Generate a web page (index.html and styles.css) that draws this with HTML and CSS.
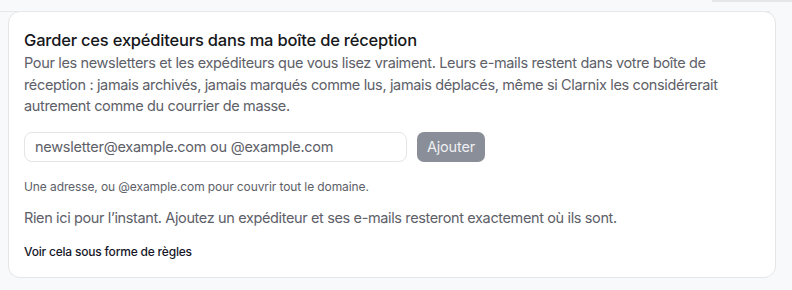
FILE: index.html
```html
<!DOCTYPE html>
<html lang="fr">
<head>
  <meta charset="UTF-8">
  <meta name="viewport" content="width=device-width, initial-scale=1.0">
  <title>Expéditeurs conservés</title>
  <link rel="stylesheet" href="styles.css">
</head>
<body>
  <div class="top-strip">
    <div class="top-tab"></div>
  </div>
  <div class="card">
    <h2>Garder ces expéditeurs dans ma boîte de réception</h2>
    <p class="desc">Pour les newsletters et les expéditeurs que vous lisez vraiment. Leurs e-mails restent dans votre boîte de réception : jamais archivés, jamais marqués comme lus, jamais déplacés, même si Clarnix les considérerait autrement comme du courrier de masse.</p>
    <div class="add-row">
      <input type="text" class="sender-input" placeholder="newsletter@example.com ou @example.com">
      <button class="add-btn" disabled>Ajouter</button>
    </div>
    <p class="hint">Une adresse, ou @example.com pour couvrir tout le domaine.</p>
    <p class="empty">Rien ici pour l’instant. Ajoutez un expéditeur et ses e-mails resteront exactement où ils sont.</p>
    <a class="rules-link" href="#">Voir cela sous forme de règles</a>
  </div>
</body>
</html>
```

FILE: styles.css
```css
body {
  font-family: Inter, "Noto Sans", sans-serif;
  background-color: #f7f9fa;
  color: #111;
  margin: 0;
  padding: 0 16px 0 8px;
}
.top-strip {
  height: 11px;
  margin-left: -8px;
  margin-right: 6px;
  border-bottom: 1px solid #e6e8eb;
  position: relative;
}
.top-tab {
  position: absolute;
  right: -22px;
  top: 0;
  width: 80px;
  height: 2px;
  background: #e4e6ea;
}
.card {
  background: #fff;
  border: 1px solid #e3e5e8;
  border-radius: 12px;
  margin-top: -1px;
  padding: 16px 15px 17px 15px;
}
.card h2 {
  font-size: 16.5px;
  font-weight: 500;
  letter-spacing: -0.2px;
  margin: 0;
  line-height: 24px;
  color: #16171a;
}
.desc {
  font-size: 14.5px;
  line-height: 21.5px;
  color: #5d6068;
  letter-spacing: -0.35px;
  margin: 0 0 15px;
}
.add-row {
  display: flex;
  gap: 10px;
  align-items: center;
}
.sender-input {
  width: 383px;
  height: 30px;
  box-sizing: border-box;
  border: 1px solid #e3e5e8;
  border-radius: 8px;
  padding: 0 10px;
  font-family: inherit;
  font-size: 14.5px;
  letter-spacing: -0.25px;
  color: #333;
  background: #fff;
}
.sender-input::placeholder {
  color: #5d6068;
}
.add-btn {
  height: 30px;
  padding: 0 10px;
  background-color: #8a8e98;
  color: #eef0f3;
  border: none;
  border-radius: 7px;
  font-family: inherit;
  font-size: 14.5px;
  letter-spacing: -0.2px;
}
.hint {
  font-size: 12px;
  color: #5d6068;
  letter-spacing: -0.1px;
  margin: 17px 0 0;
  line-height: 16px;
}
.empty {
  font-size: 14.5px;
  color: #5d6068;
  letter-spacing: -0.37px;
  margin: 13px 0 0;
  line-height: 20px;
}
.rules-link {
  display: block;
  font-size: 12px;
  font-weight: 500;
  color: #16172a;
  text-decoration: none;
  letter-spacing: -0.2px;
  margin-top: 16px;
  line-height: 16px;
}
```
